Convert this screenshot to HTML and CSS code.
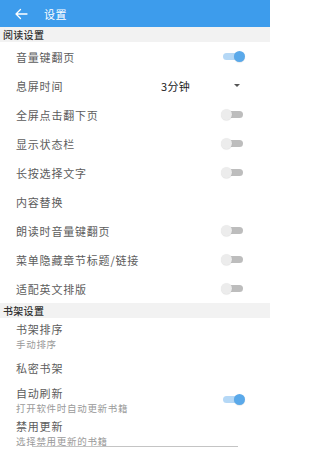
FILE: index.html
```html
<!DOCTYPE html>
<html lang="zh">
<head>
<meta charset="utf-8">
<link rel="stylesheet" href="styles.css">
</head>
<body>
<div class="page">
  <header class="topbar">
    <svg class="back" width="14" height="12" viewBox="0 0 14 12"><path d="M13 6H2M6.5 1.5L2 6l4.5 4.5" fill="none" stroke="#fff" stroke-width="1.3" stroke-linecap="round" stroke-linejoin="round"/></svg>
    <span class="title">设置</span>
  </header>

  <div class="section">阅读设置</div>
  <div class="row"><span class="label">音量键翻页</span><span class="switch on"><i></i></span></div>
  <div class="row"><span class="label">息屏时间</span><span class="value">3分钟</span><span class="caret"></span></div>
  <div class="row"><span class="label">全屏点击翻下页</span><span class="switch"><i></i></span></div>
  <div class="row"><span class="label">显示状态栏</span><span class="switch"><i></i></span></div>
  <div class="row"><span class="label">长按选择文字</span><span class="switch"><i></i></span></div>
  <div class="row"><span class="label">内容替换</span></div>
  <div class="row"><span class="label">朗读时音量键翻页</span><span class="switch"><i></i></span></div>
  <div class="row"><span class="label">菜单隐藏章节标题/链接</span><span class="switch"><i></i></span></div>
  <div class="row"><span class="label">适配英文排版</span><span class="switch"><i></i></span></div>

  <div class="section">书架设置</div>
  <div class="row two"><div class="texts"><span class="label">书架排序</span><span class="sub">手动排序</span></div></div>
  <div class="row"><span class="label">私密书架</span></div>
  <div class="row two"><div class="texts"><span class="label">自动刷新</span><span class="sub">打开软件时自动更新书籍</span></div><span class="switch on"><i></i></span></div>
  <div class="row two last"><div class="texts"><span class="label">禁用更新</span><span class="sub">选择禁用更新的书籍</span></div></div>

  <div class="edge"></div>
</div>
</body>
</html>
```
FILE: styles.css
```css
html, body {
  margin: 0;
  padding: 0;
  background: #fff;
}
body {
  font-family: "Noto Sans CJK SC", "Noto Sans", "Liberation Sans", sans-serif;
  width: 270px;
  height: 450px;
  overflow: hidden;
}
.page {
  position: relative;
  height: 450px;
  overflow: hidden;
}
.topbar {
  height: 27px;
  background: #3d9cec;
  display: flex;
  align-items: center;
  padding-left: 14px;
  gap: 16px;
}
.back { display: block; }
.title {
  color: #fff;
  font-size: 11px;
  letter-spacing: 0.5px;
}
.section {
  height: 15px;
  line-height: 15px;
  background: #f2f2f2;
  padding-left: 3px;
  font-size: 10px;
  font-weight: 500;
  color: #333;
  letter-spacing: 0.3px;
}
.row {
  height: 29px;
  display: flex;
  align-items: center;
  padding: 0 25px 0 16px;
}
.row.two {
  height: 35px;
}
.row.two.last {
  height: 34px;
  align-items: flex-start;
  padding-top: 1px;
}
.texts {
  display: flex;
  flex-direction: column;
  flex: 1;
}
.label {
  flex: 1;
  font-size: 11px;
  color: #5c5c5c;
  letter-spacing: 0.8px;
  line-height: 16px;
}
.sub {
  font-size: 9.5px;
  color: #9a9a9a;
  letter-spacing: 0.7px;
  line-height: 14px;
}
.value {
  font-size: 11px;
  color: #222;
  width: 73px;
  letter-spacing: 0.3px;
}
.caret {
  width: 0;
  height: 0;
  border-left: 3px solid transparent;
  border-right: 3px solid transparent;
  border-top: 3px solid #555;
  margin-right: 5px;
}
.switch {
  position: relative;
  width: 24px;
  height: 12px;
  display: flex;
  align-items: center;
}
.switch::before {
  content: "";
  display: block;
  width: 18px;
  height: 7px;
  margin-left: 4px;
  border-radius: 4px;
  background: #bdbdbd;
}
.switch i {
  position: absolute;
  left: 0;
  top: 0;
  width: 11px;
  height: 11px;
  border-radius: 50%;
  background: #ececec;
  box-shadow: 0 0.5px 1px rgba(0,0,0,0.15);
}
.switch.on::before {
  background: #b5d8f6;
  margin-left: 2px;
}
.switch.on i {
  left: auto;
  right: 0;
  background: #5aa9ea;
}
.edge {
  position: absolute;
  left: 32px;
  width: 206px;
  bottom: 3px;
  height: 1px;
  background: #c4c4c4;
}
```
